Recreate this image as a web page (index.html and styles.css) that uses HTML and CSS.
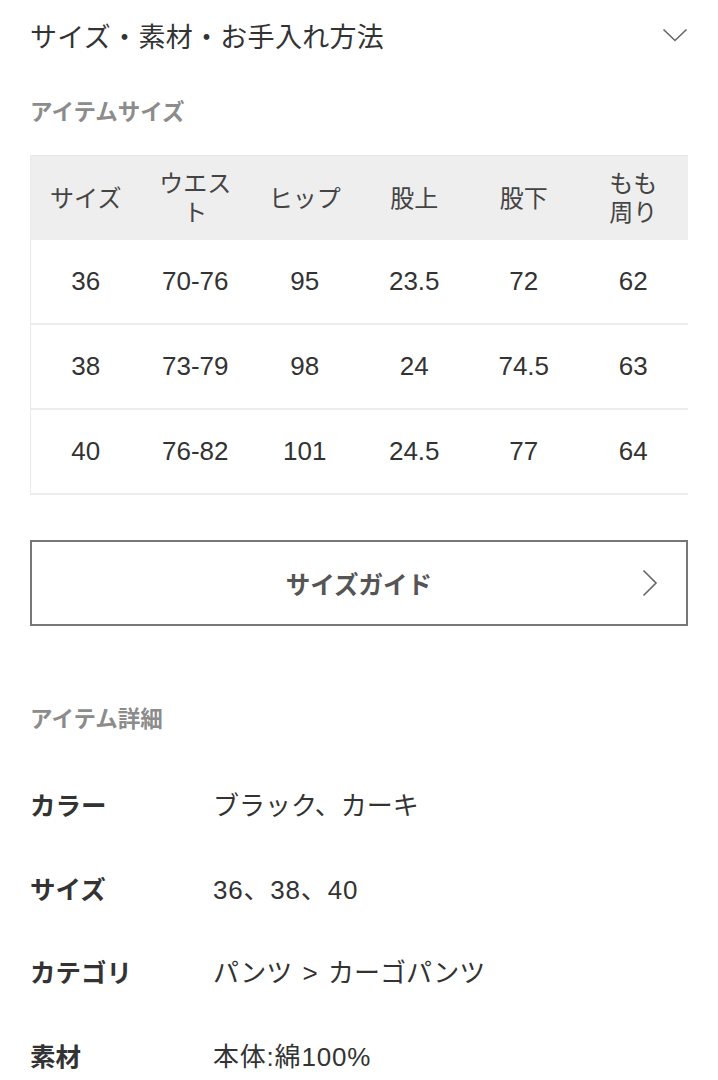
FILE: index.html
```html
<!DOCTYPE html>
<html lang="ja">
<head>
<meta charset="utf-8">
<link rel="stylesheet" href="styles.css">
</head>
<body>
<div class="page">
  <div class="acc-head">
    <span class="acc-title">サイズ・素材・お手入れ方法</span>
    <svg class="chev-down" width="26" height="14" viewBox="0 0 26 14"><polyline points="1.5,1.5 13,12.5 24.5,1.5" fill="none" stroke="#666" stroke-width="1.6"/></svg>
  </div>

  <div class="sec-label first">アイテムサイズ</div>

  <div class="table-wrap">
    <div class="grid">
      <div class="th">サイズ</div>
      <div class="th">ウエス<br>ト</div>
      <div class="th">ヒップ</div>
      <div class="th">股上</div>
      <div class="th">股下</div>
      <div class="th">もも<br>周り</div>

      <div class="td">36</div><div class="td">70-76</div><div class="td">95</div><div class="td">23.5</div><div class="td">72</div><div class="td">62</div>
      <div class="td">38</div><div class="td">73-79</div><div class="td">98</div><div class="td">24</div><div class="td">74.5</div><div class="td">63</div>
      <div class="td">40</div><div class="td">76-82</div><div class="td">101</div><div class="td">24.5</div><div class="td">77</div><div class="td">64</div>
    </div>
  </div>

  <div class="guide-btn">
    <span class="guide-text">サイズガイド</span>
    <svg class="chev-right" width="16" height="28" viewBox="0 0 16 28"><polyline points="1.5,1.5 14,14 1.5,26.5" fill="none" stroke="#666" stroke-width="1.6"/></svg>
  </div>

  <div class="sec-label second">アイテム詳細</div>

  <div class="details">
    <div class="drow"><span class="dlabel">カラー</span><span class="dval">ブラック、カーキ</span></div>
    <div class="drow"><span class="dlabel">サイズ</span><span class="dval num">36、38、40</span></div>
    <div class="drow"><span class="dlabel">カテゴリ</span><span class="dval">パンツ <span class="gt">&gt;</span> カーゴパンツ</span></div>
    <div class="drow"><span class="dlabel">素材</span><span class="dval num">本体:綿100%</span></div>
  </div>
</div>
</body>
</html>
```

FILE: styles.css
```css
html, body {
  margin: 0;
  padding: 0;
  background: #fff;
}
body {
  font-family: "Liberation Sans", "Noto Sans CJK JP", sans-serif;
  color: #333;
}
.page {
  padding: 0 30px;
}
.acc-head {
  height: 70px;
  display: flex;
  align-items: center;
  justify-content: space-between;
}
.acc-title {
  font-size: 27px;
  color: #333;
  letter-spacing: 0.3px;
}
.sec-label {
  font-size: 22.5px;
  font-weight: bold;
  color: #8c8c8c;
  line-height: 30px;
}
.sec-label.first {
  margin-top: 28px;
}
.table-wrap {
  margin-top: 27px;
  overflow: hidden;
}
.grid {
  display: grid;
  grid-template-columns: repeat(6, 1fr);
  border-left: 1px solid #ebebeb;
}
.th {
  background: #eeeeee;
  height: 85px;
  border-top: 1px solid #e6e6e6;
  box-sizing: border-box;
  display: flex;
  align-items: center;
  justify-content: center;
  text-align: center;
  font-size: 24px;
  line-height: 29px;
  color: #444;
}
.td {
  height: 85px;
  box-sizing: border-box;
  border-bottom: 2px solid #ececec;
  display: flex;
  align-items: center;
  justify-content: center;
  font-size: 26px;
  color: #333;
}
.guide-btn {
  margin-top: 45px;
  height: 86px;
  box-sizing: border-box;
  border: 2px solid #777;
  display: flex;
  align-items: center;
  justify-content: center;
  position: relative;
}
.guide-text {
  font-size: 24.5px;
  font-weight: bold;
  color: #555;
}
.chev-right {
  position: absolute;
  right: 28px;
  top: 27px;
}
.sec-label.second {
  margin-top: 79px;
}
.details {
  margin-top: 53px;
  display: flex;
  flex-direction: column;
  gap: 47.5px;
}
.drow {
  display: flex;
  align-items: center;
  line-height: 36px;
  font-size: 26px;
}
.dlabel {
  width: 183px;
  flex: none;
  font-weight: bold;
  font-size: 25.5px;
  color: #333;
}
.dval {
  color: #333;
}
.dval.num {
  letter-spacing: 0.8px;
}
.gt {
  margin: 0 3px;
}
```
